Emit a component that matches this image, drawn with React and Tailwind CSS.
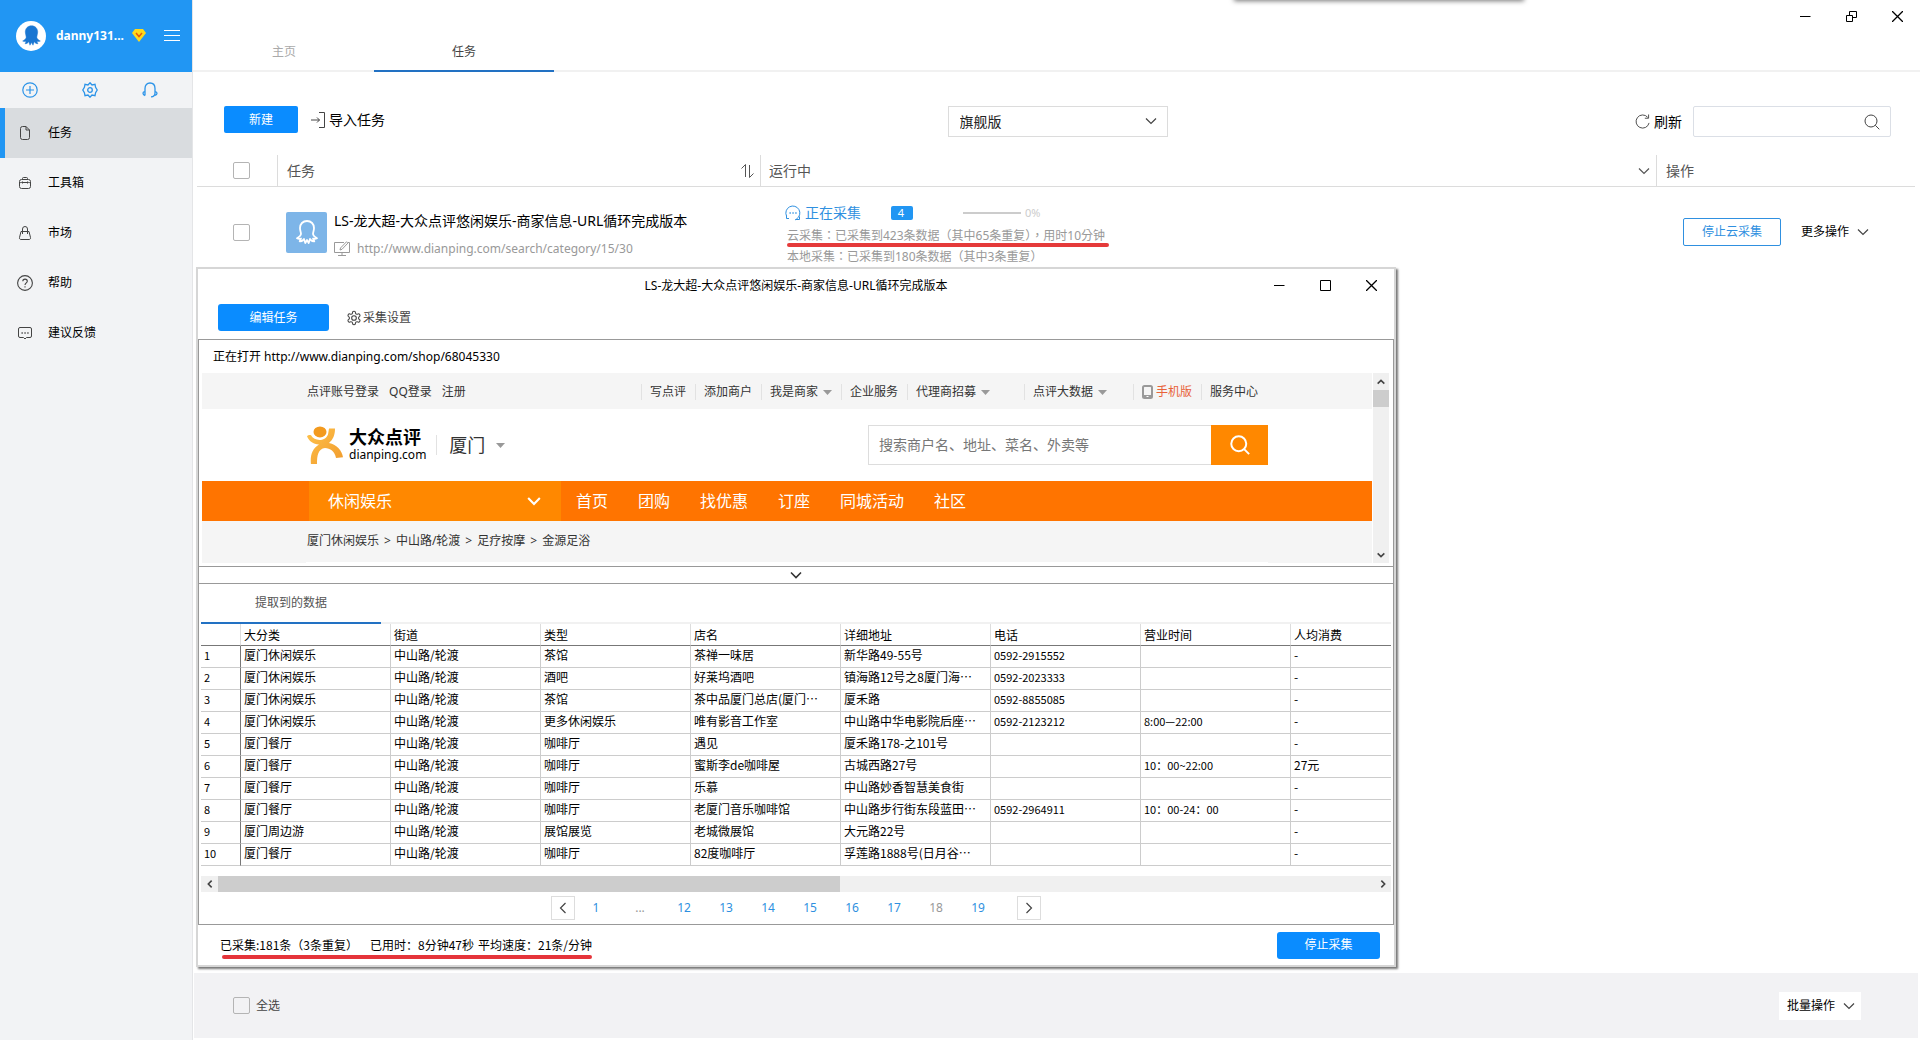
import { useState } from 'react';

const MENU = [
  { key: 'task', label: '任务', icon: FileIcon },
  { key: 'tools', label: '工具箱', icon: ToolboxIcon },
  { key: 'market', label: '市场', icon: BagIcon },
  { key: 'help', label: '帮助', icon: HelpIcon },
  { key: 'feedback', label: '建议反馈', icon: ChatIcon },
];

const TOP_LINKS = [
  { label: '写点评' },
  { label: '添加商户' },
  { label: '我是商家', arrow: true },
  { label: '企业服务' },
  { label: '代理商招募', arrow: true, pad: 'pr-[34px]' },
  { label: '点评大数据', arrow: true, pad: 'pr-[26px]' },
  { label: '手机版', phone: true },
  { label: '服务中心', pad: 'pr-0' },
];

const SITE_NAV = ['首页', '团购', '找优惠', '订座', '同城活动', '社区'];

const CRUMBS = ['厦门休闲娱乐', '中山路/轮渡', '足疗按摩', '金源足浴'];

const COLUMNS = ['大分类', '街道', '类型', '店名', '详细地址', '电话', '营业时间', '人均消费'];

const ROWS = [
  ['厦门休闲娱乐', '中山路/轮渡', '茶馆', '茶禅一味居', '新华路49-55号', '0592-2915552', '', '-'],
  ['厦门休闲娱乐', '中山路/轮渡', '酒吧', '好莱坞酒吧', '镇海路12号之8厦门海…', '0592-2023333', '', '-'],
  ['厦门休闲娱乐', '中山路/轮渡', '茶馆', '茶中品厦门总店(厦门…', '厦禾路', '0592-8855085', '', '-'],
  ['厦门休闲娱乐', '中山路/轮渡', '更多休闲娱乐', '唯有影音工作室', '中山路中华电影院后座…', '0592-2123212', '8:00—22:00', '-'],
  ['厦门餐厅', '中山路/轮渡', '咖啡厅', '遇见', '厦禾路178-之101号', '', '', '-'],
  ['厦门餐厅', '中山路/轮渡', '咖啡厅', '蜜斯李de咖啡屋', '古城西路27号', '', '10：00~22:00', '27元'],
  ['厦门餐厅', '中山路/轮渡', '咖啡厅', '乐慕', '中山路妙香智慧美食街', '', '', '-'],
  ['厦门餐厅', '中山路/轮渡', '咖啡厅', '老厦门音乐咖啡馆', '中山路步行街东段蓝田…', '0592-2964911', '10：00-24：00', '-'],
  ['厦门周边游', '中山路/轮渡', '展馆展览', '老城微展馆', '大元路22号', '', '', '-'],
  ['厦门餐厅', '中山路/轮渡', '咖啡厅', '82度咖啡厅', '孚莲路1888号(日月谷…', '', '', '-'],
];

const PAGES = ['1', '...', '12', '13', '14', '15', '16', '17', '18', '19'];

/* ---------- icons ---------- */

function Icon({ size = 'size-4', className = '', width = 1, box = 16, children }) {
  return (
    <svg
      viewBox={`0 0 ${box} ${box}`}
      className={`${size} shrink-0 ${className}`}
      fill="none"
      stroke="currentColor"
      strokeWidth={width}
      aria-hidden="true"
    >
      {children}
    </svg>
  );
}

function FileIcon() {
  return (
    <Icon>
      <path d="M3.5 3.5v9a2 2 0 0 0 2 2h5a2 2 0 0 0 2-2V5L9 1.5H5.5a2 2 0 0 0-2 2zM9 1.5V5h3.5" />
    </Icon>
  );
}

function ToolboxIcon() {
  return (
    <Icon>
      <rect x="2.5" y="4.5" width="11" height="9" rx="2" />
      <path d="M5.5 4.5v-1a1 1 0 0 1 1-1h3a1 1 0 0 1 1 1v1M2.5 8.5c1-1.5 2-1 3-1h5c1 0 2-.5 3 1M5.5 6.5v2M10.5 6.5v2" />
    </Icon>
  );
}

function BagIcon() {
  return (
    <Icon>
      <path d="M4 6.5h8l1.5 6a1.5 1.5 0 0 1-1.5 2H4a1.5 1.5 0 0 1-1.5-2zM5.5 9V4a2.5 2.5 0 0 1 5 0v5" />
    </Icon>
  );
}

function HelpIcon() {
  return (
    <Icon width={1.1}>
      <circle cx="8" cy="8" r="7.4" />
      <path d="M5.8 6.3c0-3 4.5-2.9 4.5-.1 0 1.6-2.3 1.7-2.3 3.8M8 11.2v1.3" />
    </Icon>
  );
}

function ChatIcon() {
  return (
    <Icon>
      <path d="M3 2.5h10A1.5 1.5 0 0 1 14.5 4v7a1.5 1.5 0 0 1-1.5 1.5H9.5L8 14l-1.5-1.5H3A1.5 1.5 0 0 1 1.5 11V4A1.5 1.5 0 0 1 3 2.5z" />
      <path d="M4.500 8h1.300M7.400 8h1.300M10.300 8h1.300" strokeWidth="1.5" />
    </Icon>
  );
}

function GearIcon({ className }) {
  return (
    <Icon className={className} box={24} width={1.6}>
      <circle cx="12" cy="12" r="3.5" />
      <path d="M12.220 2h-.44a2 2 0 0 0-2 2v.18a2 2 0 0 1-1 1.730l-.43.250a2 2 0 0 1-2 0l-.150-.08a2 2 0 0 0-2.730.730l-.220.380a2 2 0 0 0 .730 2.730l.150.100a2 2 0 0 1 1 1.720v.510a2 2 0 0 1-1 1.740l-.150.090a2 2 0 0 0-.730 2.730l.220.380a2 2 0 0 0 2.730.730l.150-.08a2 2 0 0 1 2 0l.430.250a2 2 0 0 1 1 1.730V20a2 2 0 0 0 2 2h.440a2 2 0 0 0 2-2v-.180a2 2 0 0 1 1-1.730l.430-.250a2 2 0 0 1 2 0l.150.080a2 2 0 0 0 2.730-.730l.220-.390a2 2 0 0 0-.730-2.730l-.150-.080a2 2 0 0 1-1-1.740v-.500a2 2 0 0 1 1-1.740l.150-.090a2 2 0 0 0 .730-2.730l-.220-.380a2 2 0 0 0-2.730-.730l-.150.080a2 2 0 0 1-2 0l-.430-.250a2 2 0 0 1-1-1.730V4a2 2 0 0 0-2-2z" />
    </Icon>
  );
}

function Chevron({ dir = 'down', size = 'size-3', className = '', width = 1.2 }) {
  const paths = {
    down: 'M1 3.5 6 8.5 11 3.5',
    up: 'M1 8.5 6 3.5 11 8.5',
    left: 'M8.5 1 3.5 6 8.5 11',
    right: 'M3.5 1 8.5 6 3.5 11',
  };
  return (
    <Icon size={size} className={className} width={width} box={12}>
      <path d={paths[dir]} />
    </Icon>
  );
}

function Caret() {
  return (
    <svg viewBox="0 0 9 5" className="h-[5px] w-[9px] shrink-0" fill="#999999" aria-hidden="true">
      <path d="M0 0h9L4.5 5z" />
    </svg>
  );
}

function Octopus({ className, filled }) {
  return (
    <svg
      viewBox="0 0 24 26"
      className={className}
      fill={filled ? 'currentColor' : 'none'}
      stroke="currentColor"
      strokeWidth={filled ? 0.5 : 1.8}
      strokeLinejoin="round"
      aria-hidden="true"
    >
      <path d="M12 2c-4.200 0-7 3-7 7 0 2.500.900 4 1 6-.200 1.800-1.800 3-4 4.200 1.300.800 2.700.800 4 .300-.300 1-.800 2-1.300 2.800 1.800.100 3.300-.800 4.300-2.300.200 1.200.800 2.600 1.300 4L12 21l1.700 3c.500-1.400 1.100-2.800 1.300-4 1 1.500 2.500 2.400 4.300 2.300-.500-.800-1-1.800-1.300-2.800 1.300.500 2.700.500 4-.300-2.200-1.200-3.800-2.400-4-4.200.100-2 1-3.500 1-6 0-4-2.800-7-7-7z" />
    </svg>
  );
}

function SearchIcon({ size, width = 1, className = '' }) {
  return (
    <Icon size={size} width={width} className={className}>
      <circle cx="7" cy="7" r="6" />
      <path d="m11.300 11.300 4 4" />
    </Icon>
  );
}

function WindowControls({ restore }) {
  return (
    <div className="flex items-center gap-[35px]">
      <button type="button" aria-label="最小化">
        <Icon size="size-[11px]" box={11}><path d="M0 5.5h10.5" /></Icon>
      </button>
      <button type="button" aria-label="最大化">
        <Icon size="size-[11px]" box={11}>
          {restore ? (
            <path d="M.5 4.5h6v6h-6zM3.500 4.500v-4h7v6h-4" />
          ) : (
            <path d="M.5.5h10v10H.5z" />
          )}
        </Icon>
      </button>
      <button type="button" aria-label="关闭">
        <Icon size="size-[11px]" box={11} width={1.3}><path d="m0 0 11 11M11 0 0 11" /></Icon>
      </button>
    </div>
  );
}

function CheckBox({ label }) {
  return (
    <input
      type="checkbox"
      aria-label={label}
      className="block size-[17px] shrink-0 appearance-none rounded-[2px] border border-[#b4b4b4] bg-transparent"
    />
  );
}

/* ---------- sidebar ---------- */

function Sidebar({ active, onSelect }) {
  return (
    <aside className="flex w-[193px] shrink-0 flex-col border-r border-[#e4e5e7] bg-[#f2f3f5]">
      <div className="flex h-[72px] items-center bg-[#2196f3] pr-3 pb-px pl-4 text-white">
        <span className="flex size-[30px] items-center justify-center rounded-full bg-white text-[#1976d2]">
          <Octopus className="h-[23px] w-[23px]" filled />
        </span>
        <span className="ml-2.5 text-xs font-bold">danny131...</span>
        <svg viewBox="0 0 14 13" className="ml-auto h-[13px] w-[14px]" aria-hidden="true">
          <path d="M3 0h8l3 4-7 9L0 4z" fill="#ffd91a" />
          <path d="m4 4 3 3.500L10 4" fill="none" stroke="#e8590c" strokeWidth="1.5" />
        </svg>
        <button type="button" aria-label="菜单" className="ml-[18px] flex w-4 flex-col gap-1">
          <span className="h-px bg-white" />
          <span className="h-px bg-white" />
          <span className="h-px bg-white" />
        </button>
      </div>

      <div className="flex h-9 items-center gap-11 pl-[22px] text-[#2b93e8]">
        <button type="button" aria-label="新增">
          <Icon width={1.2}><circle cx="8" cy="8" r="7.200" /><path d="M8 4v8M4 8h8" /></Icon>
        </button>
        <button type="button" aria-label="设置">
          <Icon width={1.3}>
            <path d="m8 .8 2 2.200 3-.700.600 3L15.200 8l-1.600 2.700-.600 3-3-.700-2 2.200L6 13l-3 .700-.600-3L.800 8l1.600-2.700.600-3 3 .700z" />
            <circle cx="8" cy="8" r="2.300" />
          </Icon>
        </button>
        <button type="button" aria-label="客服">
          <Icon width={1.3}>
            <path d="M3 13.500c-1.300-.300-2-1.200-2-2.200s.700-1.600 1.600-1.700M3 13.500V6.500C3 3 5 1 8 1s5 2 5 5.500v4.500c0 2.300-1.200 3.800-4 3.800M13 9.600c1.100.100 2 .700 2 1.700s-1 1.900-2 2" />
          </Icon>
        </button>
      </div>

      <nav>
        {MENU.map(({ key, label, icon: ItemIcon }) => (
          <a
            key={key}
            href={`#${key}`}
            onClick={() => onSelect(key)}
            className={`flex h-[50px] items-center gap-[15px] border-l-[5px] pl-3 text-xs text-black ${active === key ? 'border-[#2196f3] bg-[#d9dcdf]' : 'border-transparent'}`}
          >
            <span className="text-[#444]"><ItemIcon /></span>
            {label}
          </a>
        ))}
      </nav>
    </aside>
  );
}

/* ---------- task list ---------- */

function TaskHeader() {
  return (
    <header className="flex h-[72px] justify-between border-b-2 border-[#f1f1f1]">
      <div className="-mb-0.5 flex pl-px text-xs">
        <a href="#home" className="flex w-[180px] items-center justify-center border-b-2 border-transparent pt-[34px] text-[#aaa]">主页</a>
        <a href="#task" className="flex w-[180px] items-center justify-center border-b-2 border-[#2271c3] pt-[34px] text-[#444]">任务</a>
      </div>
      <div className="pt-[11px] pr-[17px] text-black">
        <WindowControls restore />
      </div>
    </header>
  );
}

function Toolbar() {
  return (
    <div className="grid h-[83px] grid-cols-[1fr_auto_1fr] items-start pt-[34px] pr-[29px] pl-[31px]">
      <div className="flex items-center">
        <button type="button" className="h-[27px] w-[74px] rounded-[2px] bg-[#0a8cff] text-xs text-white">新建</button>
        <button type="button" className="ml-3 flex items-center gap-[3px] text-sm leading-5 text-black">
          <Icon className="text-[#444]"><path d="M1 8h8.500M7 5.500 9.500 8 7 10.500M9 .5h5.500v15H9" /></Icon>
          导入任务
        </button>
      </div>

      <div className="relative">
        <select aria-label="版本" className="h-[31px] w-[220px] appearance-none border border-[#dcdcdc] bg-white pl-[11px] text-sm text-[#222]">
          <option>旗舰版</option>
        </select>
        <Chevron className="pointer-events-none absolute top-[9px] right-[11px] text-[#444]" />
      </div>

      <div className="flex items-center justify-end">
        <button type="button" className="flex items-center gap-1 text-sm leading-5 text-black">
          <Icon size="size-[15px]" className="text-[#444]"><path d="M15 9.500A7 7 0 1 1 13.500 3.500M14.500.500V4.500H10.500" /></Icon>
          刷新
        </button>
        <label className="ml-[11px] flex h-[31px] w-[198px] items-center rounded-[2px] border border-[#dbdfe6] pr-2.5">
          <input type="search" aria-label="搜索" className="h-full min-w-0 flex-1 pl-2 text-xs outline-none" />
          <SearchIcon size="size-4" className="text-[#444]" />
        </label>
      </div>
    </div>
  );
}

function TaskTable() {
  return (
    <table className="ml-1 w-[calc(100%-9px)] table-fixed border-separate border-spacing-0 text-left">
      <colgroup>
        <col className="w-[81px]" />
        <col className="w-[483px]" />
        <col />
        <col className="w-[258px]" />
      </colgroup>
      <thead>
        <tr className="h-8 text-sm text-[#555] [&>th]:border-b [&>th]:border-[#dcdcdc] [&>th]:p-0 [&>th]:font-normal [&>th:not(:last-child)]:border-r">
          <th><div className="pl-9"><CheckBox label="选择全部任务" /></div></th>
          <th>
            <div className="flex items-center justify-between pr-1 pl-[9px]">
              任务
              <Icon><path d="m1.500 5.500 4-4V14M9.500 2v12.500l4-4" /></Icon>
            </div>
          </th>
          <th>
            <div className="flex items-center justify-between pr-1.5 pl-2">
              运行中
              <Chevron />
            </div>
          </th>
          <th><div className="pl-[9px]">操作</div></th>
        </tr>
      </thead>
      <tbody>
        <tr className="h-[90px] [&>td]:p-0">
          <td><div className="pl-9"><CheckBox label="选择任务" /></div></td>
          <td>
            <div className="flex items-center pl-2">
              <span className="flex size-[41px] items-center justify-center rounded-[2px] bg-[#7db5e8] text-white">
                <Octopus className="h-[26px] w-6" />
              </span>
              <div className="ml-[7px] pt-1.5">
                <p className="text-sm leading-7 whitespace-nowrap text-black">LS-龙大超-大众点评悠闲娱乐-商家信息-URL循环完成版本</p>
                <p className="flex items-center gap-[7px] text-xs leading-7 text-[#999]">
                  <Icon><path d="M10 1.500H.5v10h15v-10H14M4 14.500h8M8 11.500v3M6 9l.500-2L12.500.800l1.400 1.300L8 8.300z" /></Icon>
                  http://www.dianping.com/search/category/15/30
                </p>
              </div>
            </div>
          </td>
          <td>
            <div className="pt-1 pl-[26px] font-['Noto_Sans','Noto_Sans_CJK_TC',sans-serif] text-xs whitespace-nowrap text-[#999]">
              <div className="flex h-6 items-center">
                <span className="-ml-0.5 flex items-center gap-1 text-sm text-[#2f90e0]">
                  <Icon>
                    <path d="M4 13.500H1.500v-3M1.500 11A7 7 0 1 1 11.500 14l-1.500 1M14.500 11.500v3H11" />
                    <path d="M4.500 8h1.300M7.400 8h1.300M10.300 8h1.300" strokeWidth="1.5" />
                  </Icon>
                  正在采集
                </span>
                <span className="ml-[30px] flex h-3.5 w-[22px] items-center justify-center rounded-[2px] bg-[#2196f3] pr-0.5 text-[11px] text-white">4</span>
                <span className="ml-[50px] h-0.5 w-[58px] bg-[#ccc]" />
                <span className="ml-1 text-[11px] text-[#ccc]">0%</span>
              </div>
              <p className="relative w-fit leading-[21px]">
                云采集：已采集到423条数据（其中65条重复），用时10分钟
                <span className="absolute -right-1 -bottom-px left-0 h-1 rounded-full bg-[#e53a3a]" />
              </p>
              <p className="leading-[21px]">本地采集：已采集到180条数据（其中3条重复）</p>
            </div>
          </td>
          <td>
            <div className="flex items-center pl-[26px] text-xs">
              <button type="button" className="h-7 w-[98px] rounded-[2px] border border-[#2f90e0] text-[#2f90e0]">停止云采集</button>
              <button type="button" className="ml-5 flex items-center gap-2 text-black">
                更多操作
                <Chevron className="text-[#444]" />
              </button>
            </div>
          </td>
        </tr>
      </tbody>
    </table>
  );
}

function BatchBar() {
  return (
    <footer className="mt-auto mr-0.5 mb-0.5 ml-px flex h-[65px] items-center justify-between bg-[#f2f2f4] pr-[57px] pl-[39px] text-xs">
      <label className="flex items-center gap-1.5 text-[#444]">
        <CheckBox />
        全选
      </label>
      <button type="button" className="flex h-7 w-[82px] items-center justify-between bg-white pr-1.5 pl-2 text-black">
        批量操作
        <Chevron className="text-[#444]" />
      </button>
    </footer>
  );
}

/* ---------- collection window ---------- */

function DianpingLogo() {
  return (
    <div className="flex items-center gap-1.5">
      <svg viewBox="0 0 36 45" className="h-[38px] w-[36px]" preserveAspectRatio="none" aria-hidden="true">
        <defs>
          <linearGradient id="dpBody" x1="0" y1="0" x2="1" y2="1">
            <stop offset="0" stopColor="#ffc24a" />
            <stop offset="1" stopColor="#f09a2c" />
          </linearGradient>
        </defs>
        <circle cx="13" cy="7" r="6.5" fill="#f39a1e" />
        <path d="M0 12c1-1 2-1.500 4-1 3 7 14 8 17-1l1-7h6c0 8-2 13-6 17 8 2 13 9 14 17l-7 1c-1-8-6-12-11-12-7 1-8 9-8 19l-6 1c-1-11 1-19 8-24-6-1-10-4-12-10z" fill="url(#dpBody)" />
      </svg>
      <div className="text-black">
        <p className="text-lg leading-5 font-bold">大众点评</p>
        <p className="text-xs leading-4">dianping.com</p>
      </div>
    </div>
  );
}

function WebPreview() {
  return (
    <div className="flex pr-1 pb-[3px] pl-[3px]">
      <div className="min-w-0 flex-1 text-xs text-[#333]">
        <div className="bg-[#f5f5f5]">
          <div className="mx-auto flex h-9 w-[962px] items-center justify-between pt-0.5 pr-2.5 pl-px">
            <div className="flex gap-2.5">
              <a href="#login">点评账号登录</a>
              <a href="#qq">QQ登录</a>
              <a href="#register">注册</a>
            </div>
            <div className="flex">
              {TOP_LINKS.map((link) => (
                <a
                  key={link.label}
                  href="#link"
                  className={`flex items-center gap-[5px] border-l border-[#e2e2e2] pl-2 ${link.pad || 'pr-[9px]'} ${link.phone ? 'text-[#e8633a]' : ''}`}
                >
                  {link.phone && (
                    <svg viewBox="0 0 11 14" className="-mr-0.5 h-3.5 w-[11px]" aria-hidden="true">
                      <rect x="1" y="1" width="9" height="12" rx="1.5" fill="none" stroke="#999" strokeWidth="2" />
                      <path d="M1 10h9v3H1z" fill="#999" />
                      <path d="M4.500 11h2v1h-2z" fill="#fff" />
                    </svg>
                  )}
                  {link.label}
                  {link.arrow && <Caret />}
                </a>
              ))}
            </div>
          </div>
        </div>

        <div className="mx-auto flex h-[72px] w-[962px] items-center pl-px">
          <DianpingLogo />
          <button type="button" className="ml-2.5 flex items-center gap-[11px] border-l border-[#e2e2e2] pl-3 text-lg leading-5 text-[#333]">
            厦门
            <Caret />
          </button>
          <form className="ml-auto flex h-10">
            <input
              type="text"
              aria-label="搜索商户"
              placeholder="搜索商户名、地址、菜名、外卖等"
              className="w-[343px] border border-r-0 border-[#ddd] pl-2.5 text-sm placeholder:text-[#777]"
            />
            <button type="button" aria-label="搜索" className="flex w-[57px] items-center justify-center bg-[#ff8800] text-white">
              <SearchIcon size="size-5" width={1.6} />
            </button>
          </form>
        </div>

        <div className="bg-[#ff7400]">
          <div className="mx-auto flex h-10 w-[962px] items-center pl-[3px] text-base text-white">
            <button type="button" className="flex h-full w-[252px] items-center justify-between bg-[#ff8800] pr-5 pl-[19px]">
              休闲娱乐
              <Chevron size="size-3.5" width={1.8} />
            </button>
            <nav className="ml-[15px] flex gap-[30px]">
              {SITE_NAV.map((item) => <a key={item} href="#nav">{item}</a>)}
            </nav>
          </div>
        </div>

        <div className="bg-[#f5f5f5]">
          <p className="mx-auto flex h-[42px] w-[962px] gap-[5px] border-b border-white pl-px leading-10">
            {CRUMBS.map((crumb, i) => (
              <span key={crumb} className="flex gap-[5px]">
                {i > 0 && <span>&gt;</span>}
                <a href="#crumb">{crumb}</a>
              </span>
            ))}
          </p>
        </div>
      </div>

      <div className="ml-px flex w-4 flex-col items-center bg-[#f0f0f0] text-[#444]">
        <div className="flex h-[17px] items-center"><Chevron dir="up" size="size-2" width={2.4} /></div>
        <div className="h-[17px] w-full bg-[#cdcdcd]" />
        <div className="mt-auto flex h-[17px] items-center"><Chevron size="size-2" width={2.4} /></div>
      </div>
    </div>
  );
}

function DataTable() {
  return (
    <table className="w-full table-fixed border-separate border-spacing-0 text-left font-['Noto_Sans_CJK_SC',sans-serif] text-xs text-black">
      <colgroup>
        <col className="w-10" />
        {COLUMNS.slice(0, -1).map((name) => <col key={name} className="w-[150px]" />)}
        <col />
      </colgroup>
      <thead>
        <tr className="h-[22px] [&>th]:border-b [&>th]:border-b-[#777] [&>th]:p-0 [&>th]:pl-[3px] [&>th]:leading-5 [&>th]:font-normal [&>th:not(:last-child)]:border-r [&>th:not(:last-child)]:border-r-[#ddd]">
          <th aria-label="序号" />
          {COLUMNS.map((name) => <th key={name}>{name}</th>)}
        </tr>
      </thead>
      <tbody>
        {ROWS.map((row, i) => (
          <tr
            key={i}
            className="h-[22px] [&>td]:overflow-hidden [&>td]:border-b [&>td]:border-b-[#ccc] [&>td]:p-0 [&>td]:pl-[3px] [&>td]:align-top [&>td]:leading-[18px] [&>td]:whitespace-nowrap [&>td:not(:last-child)]:border-r [&>td:not(:last-child)]:border-r-[#ccc]"
          >
            <td className="border-r-[#777]! text-[11px]">{i + 1}</td>
            {row.map((cell, j) => (
              <td key={j} className={j === 5 || j === 6 ? 'text-[11px]' : ''}>{cell}</td>
            ))}
          </tr>
        ))}
      </tbody>
    </table>
  );
}

function Pagination() {
  return (
    <nav className="flex h-8 items-center justify-center text-xs text-[#2f90e0]">
      <button type="button" aria-label="上一页" className="flex size-6 items-center justify-center border border-[#ddd] text-[#444]">
        <Chevron dir="left" />
      </button>
      {PAGES.map((page) =>
        page === '...' ? (
          <span key={page} className="w-[46px] text-center text-[#999]">...</span>
        ) : (
          <a key={page} href={`#p${page}`} className={`w-[42px] text-center ${page === '18' ? 'text-[#999]' : ''}`}>{page}</a>
        )
      )}
      <button type="button" aria-label="下一页" className="ml-[18px] flex size-6 items-center justify-center border border-[#ddd] text-[#444]">
        <Chevron dir="right" />
      </button>
    </nav>
  );
}

function CollectWindow() {
  return (
    <section className="absolute top-[267px] left-[196px] w-[1200px] border-2 border-[#d6d6d6] bg-white text-xs shadow-[2px_2px_2px_#777]">
      <div className="grid h-[33px] grid-cols-[1fr_auto_1fr] items-center text-black">
        <span />
        <h2>LS-龙大超-大众点评悠闲娱乐-商家信息-URL循环完成版本</h2>
        <div className="flex justify-end pr-[17px]">
          <WindowControls />
        </div>
      </div>

      <div className="flex h-[37px] items-start pt-0.5 pl-5">
        <button type="button" className="h-[27px] w-[111px] rounded-[3px] bg-[#0a8cff] text-white">编辑任务</button>
        <button type="button" className="ml-[17px] flex h-[27px] items-center gap-px text-[#444]">
          <GearIcon />
          采集设置
        </button>
      </div>

      <div className="border border-[#999]">
        <p className="h-[33px] pl-3.5 leading-[33px] text-black">正在打开 http://www.dianping.com/shop/68045330</p>
        <WebPreview />
        <button type="button" aria-label="收起" className="flex h-[18px] w-full items-center justify-center border-y border-[#999] text-[#333]">
          <Chevron width={1.6} />
        </button>

        <div className="pr-0.5 pl-0.5">
          <div className="flex h-10 border-b-2 border-[#f1f1f1]">
            <a href="#data" className="-mb-0.5 flex w-[180px] items-center justify-center border-b-2 border-[#2271c3] text-[#555]">提取到的数据</a>
          </div>
          <DataTable />
          <div className="mt-2.5 flex h-4 items-center bg-[#f0f0f0] text-[#444]">
            <span className="flex w-[17px] justify-center"><Chevron dir="left" size="size-2" width={2.4} /></span>
            <span className="h-full w-[622px] bg-[#cdcdcd]" />
            <span className="ml-auto flex w-[17px] justify-center"><Chevron dir="right" size="size-2" width={2.4} /></span>
          </div>
        </div>
        <Pagination />
      </div>

      <div className="flex h-10 items-center justify-between pr-3.5 pl-[22px]">
        <p className="relative flex font-['Noto_Sans_CJK_SC',sans-serif] leading-5 text-black">
          <span>已采集:181条（3条重复）</span>
          <span className="ml-3">已用时：8分钟47秒</span>
          <span className="ml-1">平均速度：21条/分钟</span>
          <span className="absolute right-0 -bottom-1 left-0.5 h-1 rounded-full bg-[#e5343a]" />
        </p>
        <button type="button" className="h-[27px] w-[103px] rounded-[3px] bg-[#0a8cff] text-white">停止采集</button>
      </div>
    </section>
  );
}

function App() {
  const [active, setActive] = useState('task');

  return (
    <div className="relative flex min-h-screen overflow-hidden bg-white font-['Noto_Sans','Noto_Sans_CJK_SC',sans-serif]">
      <Sidebar active={active} onSelect={setActive} />
      <main className="flex min-w-0 flex-1 flex-col">
        <TaskHeader />
        <Toolbar />
        <TaskTable />
        <BatchBar />
      </main>
      <CollectWindow />
      {/* edge of the window docked above the screen */}
      <div className="absolute -top-2 left-[1235px] h-2 w-[288px] shadow-[0_0_5px_1px_#777]" />
    </div>
  );
}

export default App;
